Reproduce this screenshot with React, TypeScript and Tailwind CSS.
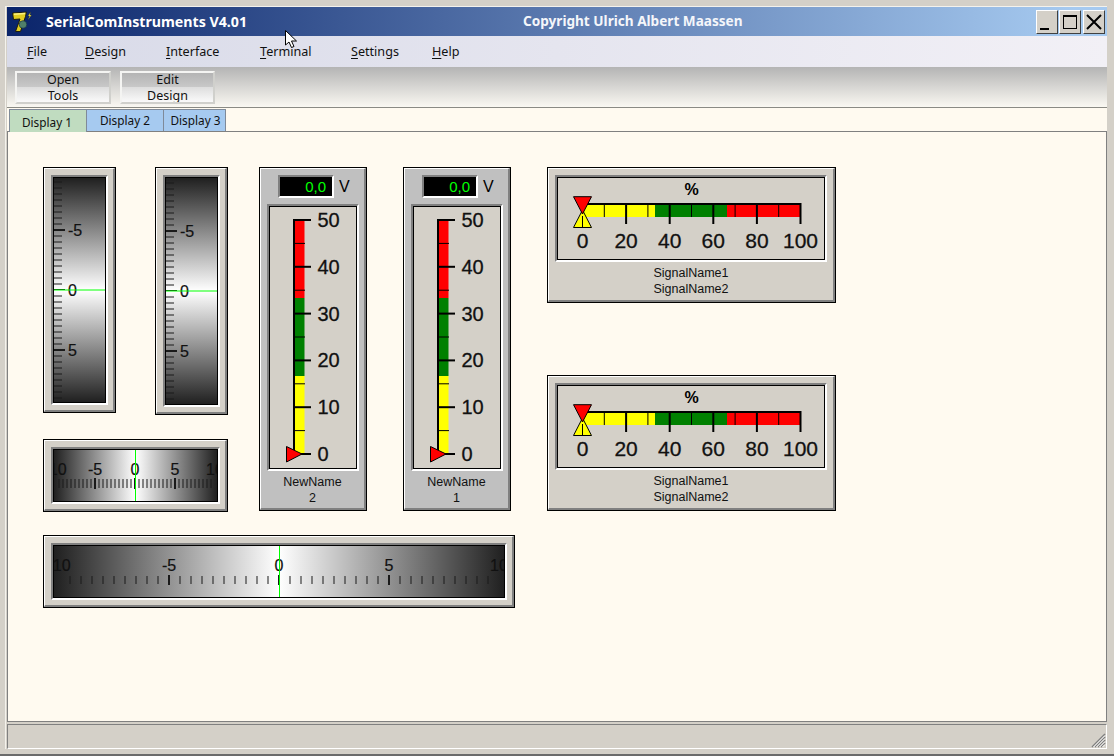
import React from "react";

const sans = "[font-family:'Liberation_Sans',Arial,sans-serif]";

function Frame({ className, children }: { className: string; children: React.ReactNode }) {
  return (
    <div className={`absolute border border-black bg-[#d4d0c8] ${className}`}>
      <div className="h-full w-full border-t border-l border-white border-b-2 border-r-2 border-b-[#808080] border-r-[#808080] pt-[6px] pl-[6px] pr-[5px] pb-[5px]">
        <div className="h-full w-full border-t-2 border-l-2 border-[#808080] border-b-2 border-r-2 border-b-white border-r-white">
          <div className="h-full w-full border border-black overflow-hidden relative">{children}</div>
        </div>
      </div>
    </div>
  );
}

const halfSteps = Array.from({ length: 39 }, (_, i) => i - 19);

function VGauge({ className, w, h, zero, id }: { className: string; w: number; h: number; zero: number; id: string }) {
  return (
    <Frame className={className}>
      <svg width={w} height={h} className="block">
        <defs>
          <linearGradient id={id} x1="0" y1="0" x2="0" y2="1">
            <stop offset="0" stopColor="#202020" />
            <stop offset="0.5" stopColor="#ffffff" />
            <stop offset="1" stopColor="#202020" />
          </linearGradient>
        </defs>
        <rect width={w} height={h} fill={`url(#${id})`} />
        {halfSteps.map((s) => {
          const y = zero + s * 6;
          const big = s % 10 === 0;
          return <rect key={s} x={0} y={y - (big ? 1 : 0.5)} width={big ? 11 : 8} height={big && s !== 0 ? 2 : 1} fill="#1a1a1a" />;
        })}
        {[-5, 0, 5].map((n) => (
          <text key={n} x={14} y={zero + n * 12 + 6} fontSize="16" fontFamily="Liberation Sans" fill="#111" stroke="#111" strokeWidth="0.2">
            {n}
          </text>
        ))}
        <rect x={0} y={zero - 0.5} width={w} height={1} fill="#00ff00" />
      </svg>
    </Frame>
  );
}

function HGauge({ className, w, h, zero, unit, tickTop, tickH, base, id }: { className: string; w: number; h: number; zero: number; unit: number; tickTop: number; tickH: number; base: number; id: string }) {
  return (
    <Frame className={className}>
      <svg width={w} height={h} className="block">
        <defs>
          <linearGradient id={id} x1="0" y1="0" x2="1" y2="0">
            <stop offset="0" stopColor="#202020" />
            <stop offset="0.5" stopColor="#ffffff" />
            <stop offset="1" stopColor="#202020" />
          </linearGradient>
        </defs>
        <rect width={w} height={h} fill={`url(#${id})`} />
        {halfSteps.map((s) => {
          const x = zero + s * unit;
          const big = s % 10 === 0;
          return <rect key={s} x={x - (big ? 1 : 0.5)} y={big ? tickTop - 1 : tickTop} width={big && s !== 0 ? 2 : 1} height={big ? tickH + 2 : tickH} fill="#1a1a1a" />;
        })}
        {[-10, -5, 0, 5, 10].map((n) => (
          <text key={n} x={zero + n * 2 * unit} y={base} textAnchor="middle" fontSize="16" fontFamily="Liberation Sans" fill="#111" stroke="#111" strokeWidth="0.2">
            {n}
          </text>
        ))}
        <rect x={zero} y={0} width={1} height={h} fill="#00ff00" />
      </svg>
    </Frame>
  );
}

function Panel({ className, bg, children }: { className: string; bg: string; children: React.ReactNode }) {
  return (
    <div className={`absolute border border-black ${bg} ${className}`}>
      <div className="flex h-full w-full flex-col border-t border-l border-white border-b-2 border-r-2 border-b-[#808080] border-r-[#808080]">{children}</div>
    </div>
  );
}

function Sunken({ className, children }: { className: string; children: React.ReactNode }) {
  return (
    <div className={`border-t-2 border-l-2 border-[#808080] border-b-2 border-r-2 border-b-white border-r-white ${className}`}>
      {children}
    </div>
  );
}

function VMeter({ className, label }: { className: string; label: string }) {
  const vals = [50, 40, 30, 20, 10, 0];
  const y0 = 247;
  const k = 4.68;
  return (
    <Panel className={className} bg="bg-[#c0c0c0]">
      <div className="mt-[6px] ml-[17px] flex items-center">
        <Sunken className="h-[23px] w-[56px]">
          <div className={`flex h-full items-center justify-end bg-black pr-[6px] text-[15px] leading-none text-[#00ff00] ${sans}`}>0,0</div>
        </Sunken>
        <span className={`ml-[5px] text-[16px] leading-none text-black ${sans}`}>V</span>
      </div>
      <Sunken className="mt-[6px] ml-[6px] h-[267px] w-[92px]">
        <div className="h-full w-full border border-black bg-[#d4d0c8]">
          <svg width={86} height={261} className="block">
            <rect x={25} y={y0 - 234} width={9.5} height={78} fill="#ff0000" />
            <rect x={25} y={y0 - 156} width={9.5} height={78} fill="#008000" />
            <rect x={25} y={y0 - 78} width={9.5} height={78} fill="#ffff00" />
            <rect x={23} y={y0 - 235} width={2} height={236} fill="#000" />
            {vals.map((v) => (
              <React.Fragment key={v}>
                <rect x={24} y={y0 - v * k - 1} width={17} height={2} fill="#000" />
                <text x={47.5} y={y0 - v * k + 7} fontSize="20" fontFamily="Liberation Sans" fill="#111" stroke="#111" strokeWidth="0.3">
                  {v}
                </text>
              </React.Fragment>
            ))}
            {[45, 35, 25, 15, 5].map((v) => (
              <rect key={v} x={25} y={y0 - v * k - 0.5} width={10} height={1} fill="#000" />
            ))}
            <polygon points={`16.5,${y0 - 7.5} 16.5,${y0 + 8} 32,${y0}`} fill="#ff0000" stroke="#000" strokeWidth="1" />
          </svg>
        </div>
      </Sunken>
      <div className={`mt-[3px] text-center text-[12.5px] leading-[16px] text-[#111] ${sans}`}>
        <div>NewName</div>
        <div>{label}</div>
      </div>
    </Panel>
  );
}

function HMeter({ className }: { className: string }) {
  const k = 2.18;
  const x0 = 24.5;
  return (
    <Panel className={className} bg="bg-[#d4d0c8]">
      <Sunken className="mt-[6px] ml-[6px] h-[87px] w-[272px]">
        <div className="h-full w-full border border-black">
          <svg width={266} height={81} className="block">
            <text x={133.5} y={17} textAnchor="middle" fontSize="16" fontWeight="bold" fontFamily="Liberation Sans" fill="#000">
              %
            </text>
            <rect x={x0} y={27} width={72.5} height={12} fill="#ffff00" />
            <rect x={x0 + 72.5} y={27} width={72} height={12} fill="#008000" />
            <rect x={x0 + 144.5} y={27} width={73.5} height={12} fill="#ff0000" />
            <rect x={x0 - 1} y={25} width={219} height={2} fill="#000" />
            {[0, 20, 40, 60, 80, 100].map((v) => (
              <React.Fragment key={v}>
                <rect x={x0 + v * k - 1} y={25} width={2} height={21} fill="#000" />
                <text x={x0 + v * k} y={70} textAnchor="middle" fontSize="21" fontFamily="Liberation Sans" fill="#111" stroke="#111" strokeWidth="0.3">
                  {v}
                </text>
              </React.Fragment>
            ))}
            {[10, 30, 50, 70, 90].map((v) => (
              <rect key={v} x={x0 + v * k - 0.5} y={27} width={1} height={12} fill="#000" />
            ))}
            <polygon points={`${x0},32 ${x0 + 9},49.5 ${x0 - 9},49.5`} fill="#ffff00" stroke="#000" strokeWidth="1" />
            <rect x={x0 - 0.5} y={38} width={1} height={11} fill="#000" />
            <polygon points={`${x0 - 9},18.7 ${x0 + 9},18.7 ${x0},36`} fill="#ff0000" stroke="#000" strokeWidth="1" />
          </svg>
        </div>
      </Sunken>
      <div className={`mt-[3px] text-center text-[12.5px] leading-[16px] text-[#111] ${sans}`}>
        <div>SignalName1</div>
        <div>SignalName2</div>
      </div>
    </Panel>
  );
}

function WinButton({ children }: { children: React.ReactNode }) {
  return (
    <div className="h-[24px] w-[22px] border-t border-l border-white border-b border-r border-b-[#404040] border-r-[#404040] bg-[#d4d0c8]">
      {children}
    </div>
  );
}

function ToolButton({ a, b, w }: { a: string; b: string; w: string }) {
  return (
    <div className={`h-[33px] ${w} overflow-hidden border-2 border-[#f4f4f2] border-r-[#d0d0cc] border-b-[#d0d0cc] bg-[linear-gradient(to_bottom,#b4b4b4_0%,#c8c8c8_48%,#dedede_50%,#fafafa_100%)] text-center text-[12.5px] leading-[16px] text-[#111]`}>
      <div className="-mt-[1px]">{a}</div>
      <div>{b}</div>
    </div>
  );
}

function MenuItem({ first, rest, w }: { first: string; rest: string; w: string }) {
  return (
    <div className={`text-[12.6px] text-[#111] ${w}`}>
      <span className="underline underline-offset-2">{first}</span>
      {rest}
    </div>
  );
}

export default function App() {
  return (
    <div className={`relative h-[756px] w-[1114px] overflow-hidden border-b-2 border-b-[#6b6b6b] bg-[#d4d0c8] pt-[6px] pl-[5px] pr-[7px] pb-[5px] ${sans}`}>
      <div className="flex h-full flex-col border-t border-l border-[#f4f2ec] pl-[1px]">
        {/* title bar */}
        <div className="flex h-[29px] shrink-0 items-center bg-[linear-gradient(to_right,#0a246a,#a6caf0_97%)]">
          <svg width="24" height="24" viewBox="0 0 24 24" className="ml-[4px]">
            <path d="M1.5 3 L15.5 2 L14.5 6.5 L9.5 21.5 L4.5 21.5 L9 9 L2.5 9.5 Z" fill="#e0cc20" stroke="#1c1c10" strokeWidth="1" />
            <path d="M3 4.3 L14 3.5" stroke="#fbf080" strokeWidth="1.4" fill="none" />
            <circle cx="12" cy="14.5" r="3.8" fill="#4f7f6a" stroke="#12304a" strokeWidth="0.7" />
            <path d="M19.5 2 L17 6 L18.5 6 L17 10 L20.5 5 L19 5 Z" fill="#f0e840" stroke="#222" strokeWidth="0.3" />
          </svg>
          <div className="ml-[11px] w-[477px] font-['Noto_Sans'] text-[14.2px] font-bold text-white">SerialComInstruments V4.01</div>
          <div className="font-['Noto_Sans'] text-[13.6px] font-bold text-[#f4f6fa]">Copyright Ulrich Albert Maassen</div>
          <div className="ml-auto mr-[2px] flex">
            <WinButton>
              <svg width="20" height="22"><rect x="3" y="17" width="9" height="2" fill="#000" /></svg>
            </WinButton>
            <div className="w-px" />
            <WinButton>
              <svg width="20" height="22"><rect x="3.5" y="4.5" width="13" height="13" fill="none" stroke="#000" /><rect x="3" y="4" width="14" height="2" fill="#000" /></svg>
            </WinButton>
            <div className="w-[2px]" />
            <WinButton>
              <svg width="20" height="22"><path d="M3 4 L17 18 M17 4 L3 18" stroke="#000" strokeWidth="2" /></svg>
            </WinButton>
          </div>
        </div>
        {/* menu */}
        <div className="flex h-[31px] shrink-0 items-center bg-[linear-gradient(to_right,#d8dae8,#f2f0f6)] pl-[20px] pt-[1px] font-['Noto_Sans']">
          <MenuItem first="F" rest="ile" w="w-[58px]" />
          <MenuItem first="D" rest="esign" w="w-[81px]" />
          <MenuItem first="I" rest="nterface" w="w-[94px]" />
          <MenuItem first="T" rest="erminal" w="w-[91px]" />
          <MenuItem first="S" rest="ettings" w="w-[81px]" />
          <MenuItem first="H" rest="elp" w="w-[40px]" />
        </div>
        {/* toolbar */}
        <div className="flex h-[41px] shrink-0 items-start gap-[9px] border-b border-[#8a8a84] bg-[linear-gradient(to_bottom,#b4b4b4,#faf8f2)] pl-[8px] pt-[4px] font-['Noto_Sans']">
          <ToolButton a="Open" b="Tools" w="w-[96px]" />
          <ToolButton a="Edit" b="Design" w="w-[95px]" />
        </div>
        {/* tabs */}
        <div className="flex h-[24px] shrink-0 items-end border-b border-[#808080] bg-[#fffaf0] pl-[2px] font-['Noto_Sans'] text-[11.8px] text-[#111]">
          <div className="-mb-px flex h-[23px] w-[78px] justify-center border-t border-l border-r border-t-[#7f8a99] border-x-[#7f8a99] bg-[#c0dcc0] pt-[4px] pr-[2px] leading-[16px]">Display 1</div>
          <div className="flex h-[22px] w-[77px] justify-center border-t border-r border-[#7f8a99] bg-[#a6caf0] pt-[2px] leading-[16px]">Display 2</div>
          <div className="flex h-[22px] w-[62px] justify-center border-t border-r border-[#7f8a99] bg-[#a6caf0] pt-[2px] pl-[2px] leading-[16px]">Display 3</div>
        </div>
        {/* design canvas: instruments sit at free positions */}
        <div className="relative min-h-0 flex-1 border border-t-0 border-[#808080] bg-[#fffaf0]">
          <VGauge id="v1" className="left-[35px] top-[35px] h-[246px] w-[73px]" w={51} h={224} zero={112} />
          <VGauge id="v2" className="left-[147px] top-[35px] h-[248px] w-[73px]" w={51} h={226} zero={113} />
          <HGauge id="hs" className="left-[35px] top-[307px] h-[73px] w-[185px]" w={163} h={51} zero={81} unit={4} tickTop={29} tickH={9} base={25} />
          <HGauge id="hl" className="left-[35px] top-[403px] h-[73px] w-[472px]" w={450} h={51} zero={225} unit={11} tickTop={30} tickH={8} base={25} />
          <VMeter className="left-[251px] top-[35px] h-[344px] w-[108px]" label="2" />
          <VMeter className="left-[395px] top-[35px] h-[344px] w-[108px]" label="1" />
          <HMeter className="left-[539px] top-[35px] h-[136px] w-[289px]" />
          <HMeter className="left-[539px] top-[243px] h-[136px] w-[289px]" />
        </div>
        {/* status bar */}
        <div className="mt-[2px] flex h-[25px] shrink-0 justify-end border-t border-l border-[#808080] border-b border-r border-b-white border-r-white bg-[#d4d0c8]">
          <svg width="16" height="16" className="self-end">
            <path d="M15 2 L2 15 M15 5 L5 15 M15 8 L8 15 M15 11 L11 15" stroke="#808080" strokeWidth="1.5" />
            <path d="M15 3.5 L3.5 15 M15 6.5 L6.5 15 M15 9.5 L9.5 15 M15 12.5 L12.5 15" stroke="#ffffff" strokeWidth="1" />
          </svg>
        </div>
      </div>
      {/* mouse pointer over the window */}
      <svg width="14" height="20" className="absolute left-[285px] top-[30px]">
        <path d="M0.5 0.5 L0.5 15 L4 12 L6.5 17.5 L9 16.5 L6.5 11 L11.5 11 Z" fill="#fff" stroke="#000" strokeWidth="1" />
      </svg>
    </div>
  );
}
